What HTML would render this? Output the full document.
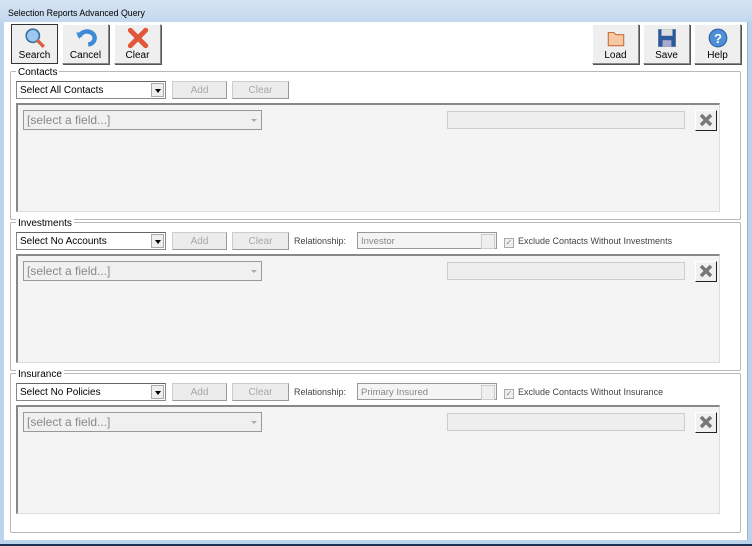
<!DOCTYPE html>
<html><head><meta charset="utf-8"><style>
*{box-sizing:border-box;margin:0;padding:0}
body{width:752px;height:546px;position:relative;overflow:hidden;font-family:"Liberation Sans",sans-serif;font-size:10px;background:#bcd3ec}
.a{position:absolute}
#title{left:0;top:0;width:752px;height:22px;background:linear-gradient(#d6e4f3,#c3d8ee);}
#title span{position:absolute;left:8px;top:8px;font-size:8.8px;color:#000}
#body{left:4px;top:22px;width:744px;height:518px;background:#fff;border-right:1px solid #9fb3c8}
#bot{left:0;top:544px;width:752px;height:2px;background:#1d3450}
.btn{position:absolute;height:40px;width:47px;background:#efefef;border:1px solid;border-color:#fff #888 #888 #fff;box-shadow:1px 1px 0 #555;text-align:center;font-size:10px}
.btn .t{position:absolute;left:0;right:0;bottom:2px}
.btn svg{position:absolute;left:12px;top:2px}
.fs{position:absolute;left:10px;width:731px;border:1px solid #b8b8b8;border-radius:2px;box-shadow:inset 1px 1px 0 #fff}
.lg{position:absolute;background:#fff;padding:0 2px;font-size:10px;top:-5px;left:5px}
.sel{position:absolute;height:18px;width:150px;border:1px solid #888;border-top-color:#666;background:#fff;font-size:10px;padding:3px 3px}
.sel .ar{position:absolute;right:1px;top:1px;width:13px;height:14px;background:#eee;border:1px solid #aaa}
.sel .ar:after{content:"";position:absolute;left:3px;top:5px;border:3px solid transparent;border-top:4px solid #000}
.gb{position:absolute;height:18px;background:#ececec;border:1px solid #ccc;border-right-color:#999;border-bottom-color:#999;color:#a8a8a8;text-align:center;padding-top:3px;font-size:10px}
.pan{position:absolute;left:16px;width:704px;height:109px;background:#f4f4f4;border-top:2px solid #888;border-left:2px solid #888;border-right:1px solid #ddd;border-bottom:1px solid #ddd}
.fsel{position:absolute;left:5px;top:5px;width:239px;height:20px;border:1px solid #999;background:#f0f0f0;color:#888;font-size:12px;padding:2px 3px}
.fsel:after{content:"";position:absolute;right:4px;top:8px;border:3px solid transparent;border-top:3px solid #aaa}
.tb{position:absolute;left:429px;top:6px;width:238px;height:18px;border:1px solid #ccc;background:#eee}
.xb{position:absolute;left:677px;top:5px;width:22px;height:21px;background:#f0f0f0;border:1px solid;border-color:#fff #222 #222 #fff}
.rel{position:absolute;color:#444;font-size:9px}
.rs{position:absolute;width:140px;height:17px;border:1px solid #999;background:#f4f4f4;color:#888;padding:3px 3px;font-size:9.5px}
.rs:after{content:"";position:absolute;right:1px;top:1px;width:12px;height:13px;background:#eee;border:1px solid #ccc}
.chk{position:absolute;color:#444;font-size:9px}
.chk i{display:inline-block;width:10px;height:10px;border:1px solid #aaa;background:#eee;vertical-align:-1px;margin-right:4px;font-style:normal;font-size:8px;line-height:8px;color:#888;text-align:center}
</style></head><body>
<div id="title" class="a"><span>Selection Reports Advanced Query</span></div>
<div id="body" class="a"></div>
<div id="bot" class="a"></div>

<div class="btn" style="left:11px;top:24px;border-color:#333;box-shadow:none;border-width:1px"><svg width="22" height="22" viewBox="0 0 20 20"><circle cx="8" cy="8" r="6" fill="#9cc8ef" stroke="#3b6ea5" stroke-width="1.5"/><path d="M12 12l6 6" stroke="#d9603b" stroke-width="3"/></svg><span class="t">Search</span></div>
<div class="btn" style="left:62px;top:24px"><svg width="22" height="22" viewBox="0 0 20 20"><path d="M4 9 A7 6 0 1 1 12 16" fill="none" stroke="#3d8ad8" stroke-width="4"/><path d="M1 5l6 0l-3 6z" fill="#3d8ad8"/></svg><span class="t">Cancel</span></div>
<div class="btn" style="left:114px;top:24px"><svg width="22" height="22" viewBox="0 0 20 20"><path d="M3 3L17 17M17 3L3 17" stroke="#e0573a" stroke-width="4.5" stroke-linecap="round"/></svg><span class="t">Clear</span></div>
<div class="btn" style="left:592px;top:24px"><svg width="22" height="22" viewBox="0 0 20 20"><path d="M3 5h5l2 2h7v10H3z" fill="#f6c9a3" stroke="#c8703b"/></svg><span class="t">Load</span></div>
<div class="btn" style="left:643px;top:24px"><svg width="22" height="22" viewBox="0 0 20 20"><rect x="2" y="2" width="16" height="16" fill="#2c5a9a"/><rect x="5" y="2" width="10" height="6" fill="#ddd"/><rect x="6" y="12" width="8" height="6" fill="#aac"/></svg><span class="t">Save</span></div>
<div class="btn" style="left:694px;top:24px"><svg width="22" height="22" viewBox="0 0 20 20"><circle cx="10" cy="10" r="8" fill="#4f8fd8" stroke="#2a5ea0"/><text x="10" y="14.5" font-size="12" font-weight="bold" fill="#fff" text-anchor="middle" font-family="Liberation Sans">?</text></svg><span class="t">Help</span></div>

<div class="fs" style="top:71px;height:149px"><span class="lg">Contacts</span></div>
<div class="sel" style="left:16px;top:81px">Select All Contacts<span class="ar"></span></div>
<div class="gb" style="left:172px;top:81px;width:55px">Add</div>
<div class="gb" style="left:232px;top:81px;width:57px">Clear</div>
<div class="pan" style="top:103px"><div class="fsel">[select a field...]</div><div class="tb"></div><div class="xb"><svg width="20" height="19" viewBox="0 0 20 19"><path d="M5 4L15 14M15 4L5 14" stroke="#777" stroke-width="3.5"/></svg></div></div>

<div class="fs" style="top:222px;height:149px"><span class="lg">Investments</span></div>
<div class="sel" style="left:16px;top:232px">Select No Accounts<span class="ar"></span></div>
<div class="gb" style="left:172px;top:232px;width:55px">Add</div>
<div class="gb" style="left:232px;top:232px;width:57px">Clear</div>
<span class="rel" style="left:294px;top:236px">Relationship:</span>
<div class="rs" style="left:357px;top:232px">Investor</div>
<span class="chk" style="left:504px;top:236px"><i>✓</i>Exclude Contacts Without Investments</span>
<div class="pan" style="top:254px"><div class="fsel">[select a field...]</div><div class="tb"></div><div class="xb"><svg width="20" height="19" viewBox="0 0 20 19"><path d="M5 4L15 14M15 4L5 14" stroke="#777" stroke-width="3.5"/></svg></div></div>

<div class="fs" style="top:373px;height:160px"><span class="lg">Insurance</span></div>
<div class="sel" style="left:16px;top:383px">Select No Policies<span class="ar"></span></div>
<div class="gb" style="left:172px;top:383px;width:55px">Add</div>
<div class="gb" style="left:232px;top:383px;width:57px">Clear</div>
<span class="rel" style="left:294px;top:387px">Relationship:</span>
<div class="rs" style="left:357px;top:383px">Primary Insured</div>
<span class="chk" style="left:504px;top:387px"><i>✓</i>Exclude Contacts Without Insurance</span>
<div class="pan" style="top:405px"><div class="fsel">[select a field...]</div><div class="tb"></div><div class="xb"><svg width="20" height="19" viewBox="0 0 20 19"><path d="M5 4L15 14M15 4L5 14" stroke="#777" stroke-width="3.5"/></svg></div></div>
</body></html>
